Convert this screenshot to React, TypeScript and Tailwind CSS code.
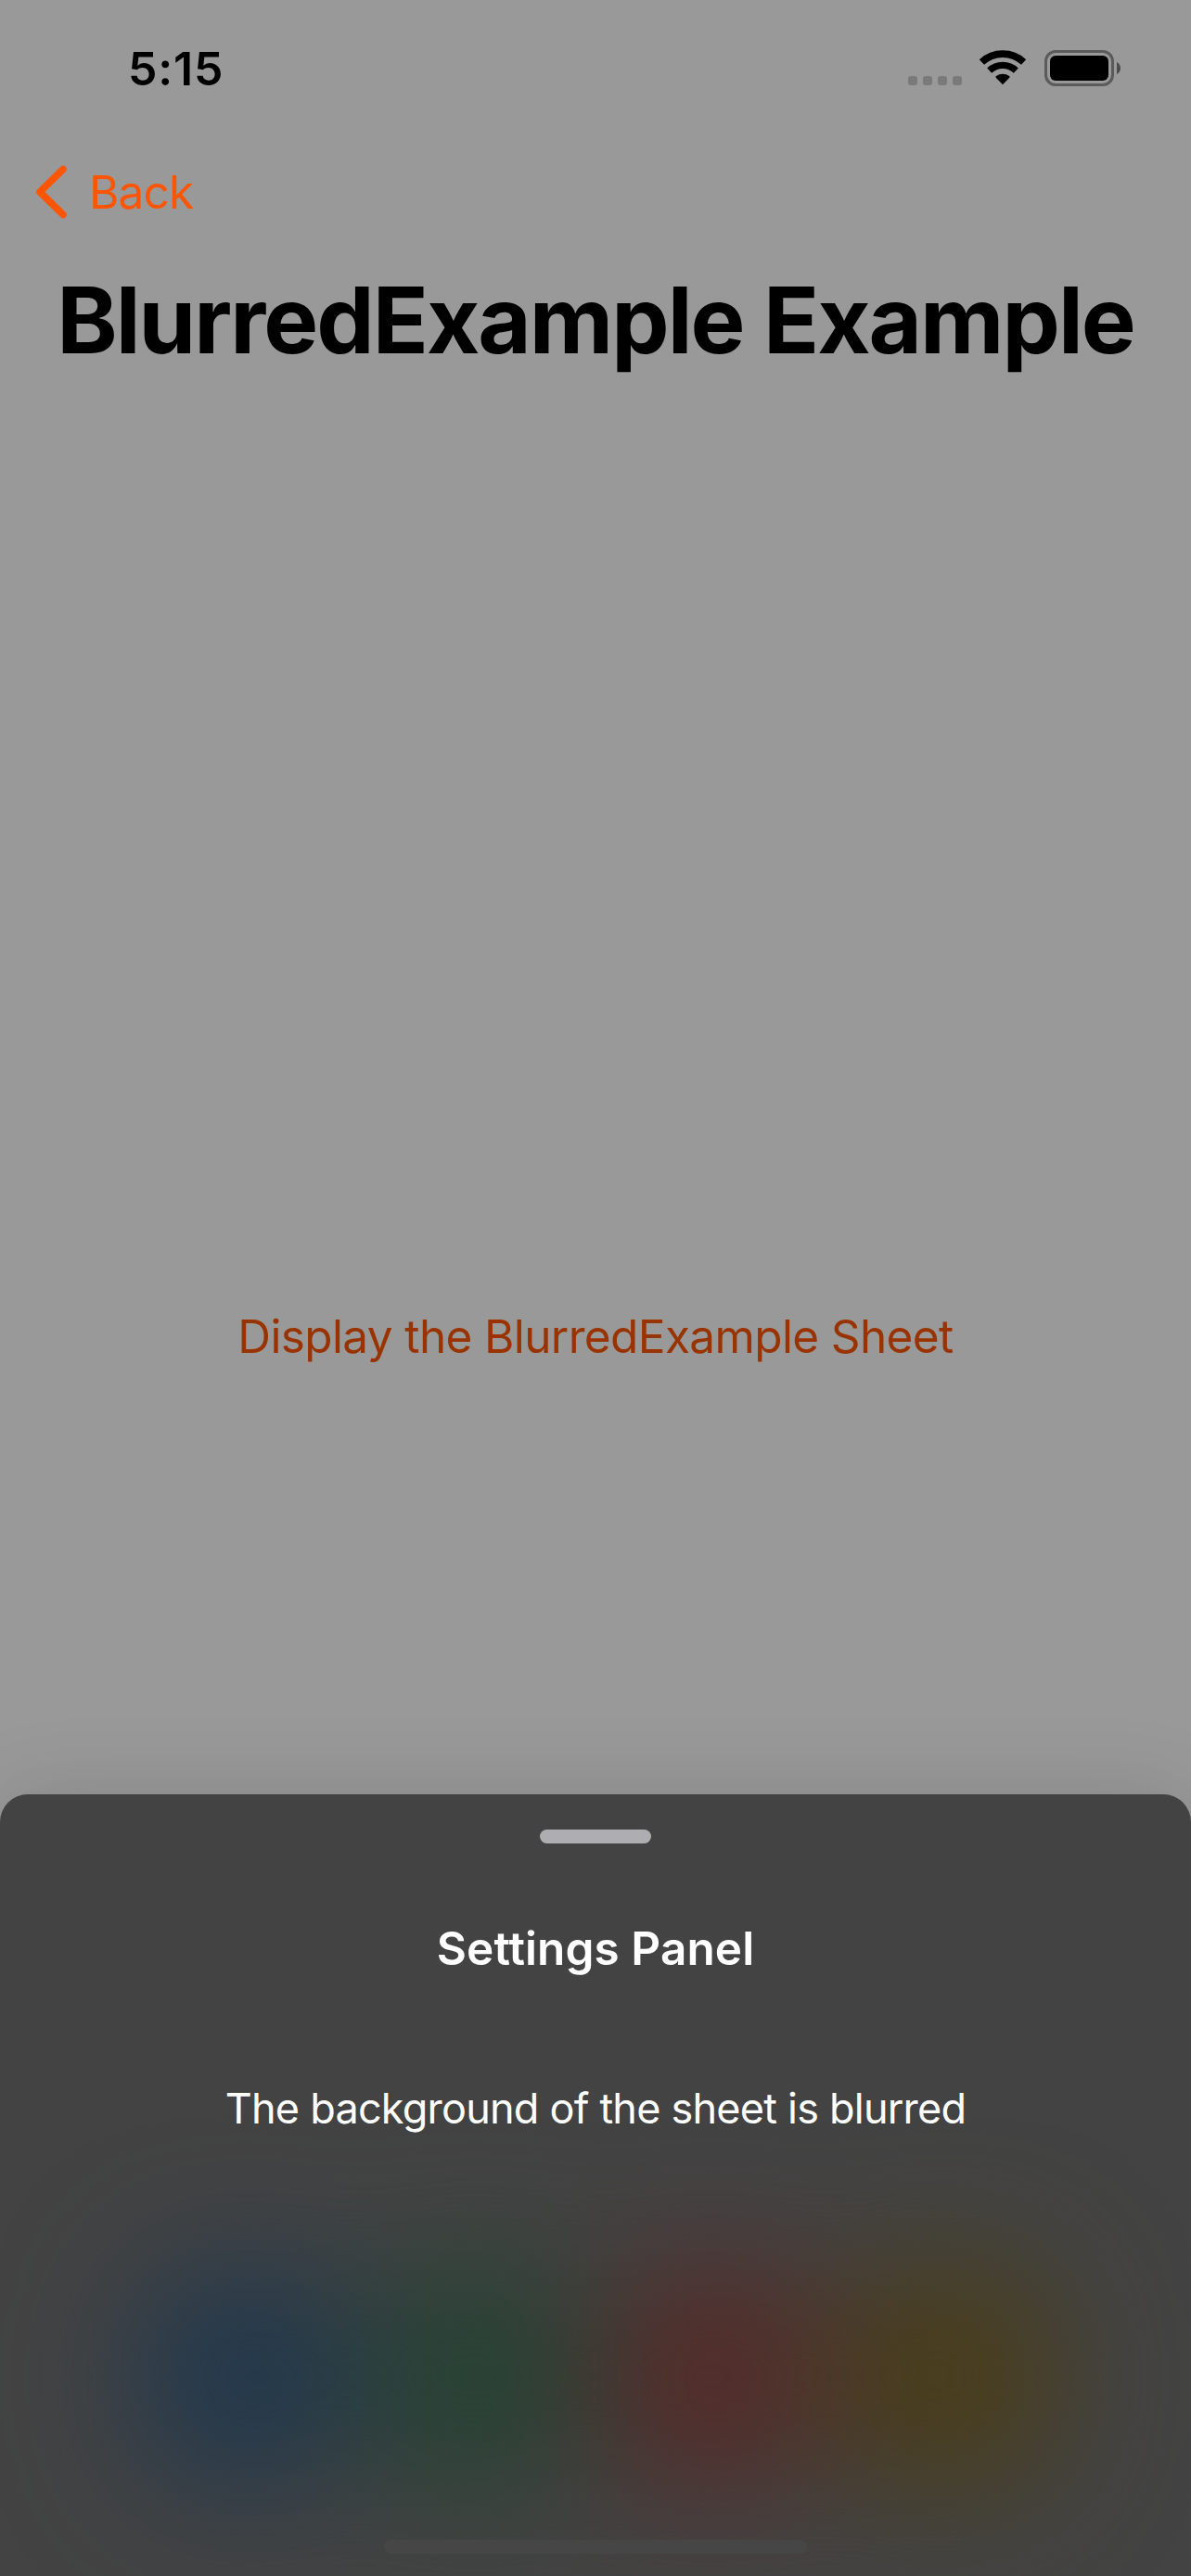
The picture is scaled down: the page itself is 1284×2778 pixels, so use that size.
const glows = [
  "bg-[#21384d]",
  "bg-[#264233]",
  "mx-[4px] bg-[#542b28]",
  "bg-[#4a3d18]",
];

function WifiIcon() {
  return (
    <svg className="h-[38px] w-[52px]" viewBox="0 0 52 38" fill="none">
      <path d="M3.4 13.2A33.2 33.2 0 0 1 48.6 13.2" transform="translate(0 -0.2)" stroke="black" strokeWidth="7.7" />
      <path d="M11.7 22.1A20.7 20.7 0 0 1 40.3 22.1" stroke="black" strokeWidth="7.3" />
      <path d="M26 37.3L18.7 29.8Q17.8 28.8 19 28A12 12 0 0 1 33 28Q34.200 28.800 33.300 29.800Z" fill="black" />
    </svg>
  );
}

function StatusBar() {
  return (
    <header className="flex h-[146px] items-center justify-between pl-[138px] pr-[76px]">
      <time className="pt-px text-[50px] font-semibold leading-none tracking-[0.8px]">5:15</time>
      <div className="flex h-[38px] items-center">
        <div className="mr-[18px] flex gap-[6px] self-end">
          <span className="size-[10px] rounded-[3px] bg-[#7a7a7a]" />
          <span className="size-[10px] rounded-[3px] bg-[#7a7a7a]" />
          <span className="size-[10px] rounded-[3px] bg-[#7a7a7a]" />
          <span className="size-[10px] rounded-[3px] bg-[#7a7a7a]" />
        </div>
        <WifiIcon />
        <div className="ml-[19px] h-[39px] w-[75px] rounded-[12px] border-[3px] border-[#5b5b5b] p-[3px]">
          <div className="h-full rounded-[6px] bg-black" />
        </div>
        <svg className="ml-[3px] h-[13px] w-[4px]" viewBox="0 0 4 13">
          <path d="M0 0C5.300 2.500 5.300 10.500 0 13Z" fill="#4c4c4c" />
        </svg>
      </div>
    </header>
  );
}

export default function App() {
  return (
    <div className="flex h-[2778px] w-[1284px] flex-col overflow-hidden bg-[#999999] font-['Inter',sans-serif] text-black">
      <StatusBar />
      <nav className="flex h-[122px] items-center">
        <button className="flex items-center text-[#ff5500]">
          <svg className="ml-[36px] h-[64px] w-[40px]" viewBox="0 0 40 64" fill="none">
            <path d="M32 7.500L7 32L32 56.500" stroke="currentColor" strokeWidth="7.600" strokeLinecap="round" strokeLinejoin="round" />
          </svg>
          <span className="ml-[20px] pt-px text-[49.500px] leading-none tracking-[-0.8px]">Back</span>
        </button>
      </nav>
      <h1 className="flex h-[154px] items-center justify-center whitespace-nowrap text-[99px] font-bold leading-none tracking-[-1.950px]">
        BlurredExample Example
      </h1>
      <main className="flex h-[1513px] shrink-0 justify-center pt-[979px]">
        <button className="h-[80px] whitespace-nowrap text-[49.500px] leading-[80px] tracking-[-0.620px] text-[#993300]">
          Display the BlurredExample Sheet
        </button>
      </main>
      <section className="relative flex h-[843px] shrink-0 flex-col items-center rounded-t-[30px] bg-[#434343] text-white shadow-[0_0_90px_rgba(0,0,0,0.13)]">
        <div className="absolute inset-0 overflow-hidden rounded-t-[30px]">
          <div className="mt-[510px] flex justify-center gap-[20px] blur-[70px]">
            {glows.map((color) => (
              <div key={color} className={`h-[236px] w-[230px] rounded-[80px] ${color}`} />
            ))}
          </div>
        </div>
        <div className="relative mt-[38px] h-[15px] w-[120px] rounded-full bg-[#aeaeb2]" />
        <h2 className="relative mt-[73px] h-[80px] text-[49.500px] font-semibold leading-[80px] tracking-[0.1px]">
          Settings Panel
        </h2>
        <p className="relative mt-[93px] h-[80px] text-[45px] leading-[80px] tracking-[-0.780px]">
          The background of the sheet is blurred
        </p>
        <div className="relative mb-[24px] mt-auto h-[15px] w-[456px] rounded-full bg-[#474646]" />
      </section>
    </div>
  );
}
